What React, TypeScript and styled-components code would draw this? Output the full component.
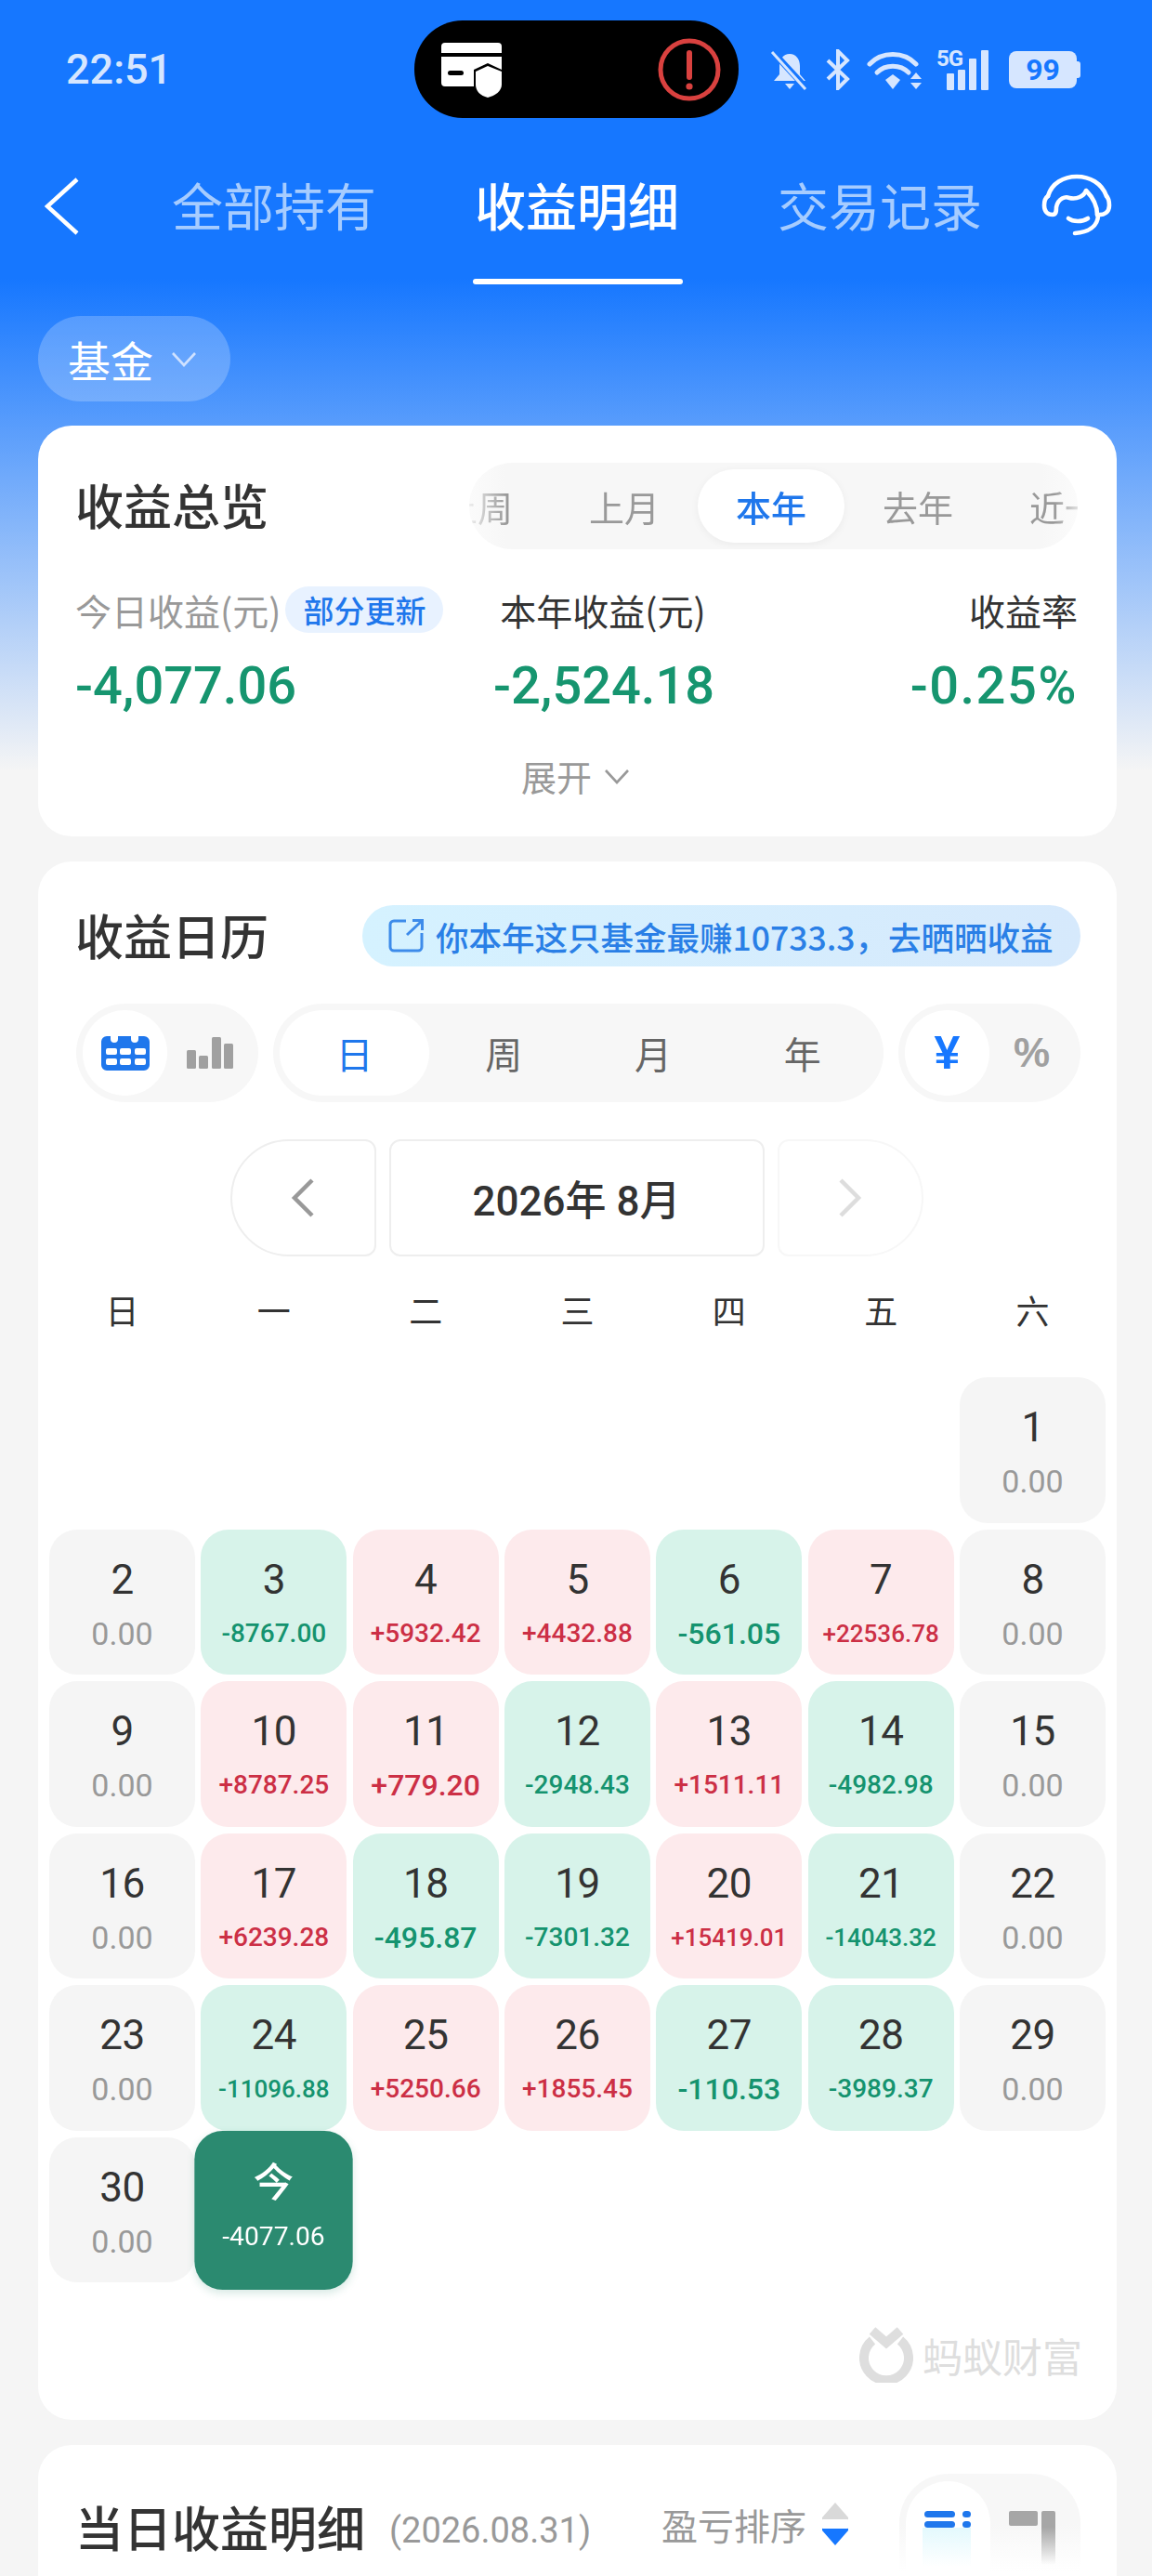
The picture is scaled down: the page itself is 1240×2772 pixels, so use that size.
import React from "react";
import styled, { createGlobalStyle } from "styled-components";

const CJK = `"Noto Sans CJK SC", "Noto Sans", sans-serif`;
const NUM = `Roboto, "Noto Sans CJK SC", sans-serif`;

type Tone = "none" | "up" | "down";

const DAYS: { day: number; value: string; tone: Tone; size?: number }[] = [
  { day: 1, value: "0.00", tone: "none" },
  { day: 2, value: "0.00", tone: "none" },
  { day: 3, value: "-8767.00", tone: "down" },
  { day: 4, value: "+5932.42", tone: "up" },
  { day: 5, value: "+4432.88", tone: "up" },
  { day: 6, value: "-561.05", tone: "down", size: 32 },
  { day: 7, value: "+22536.78", tone: "up", size: 26 },
  { day: 8, value: "0.00", tone: "none" },
  { day: 9, value: "0.00", tone: "none" },
  { day: 10, value: "+8787.25", tone: "up" },
  { day: 11, value: "+779.20", tone: "up", size: 32 },
  { day: 12, value: "-2948.43", tone: "down" },
  { day: 13, value: "+1511.11", tone: "up" },
  { day: 14, value: "-4982.98", tone: "down" },
  { day: 15, value: "0.00", tone: "none" },
  { day: 16, value: "0.00", tone: "none" },
  { day: 17, value: "+6239.28", tone: "up" },
  { day: 18, value: "-495.87", tone: "down", size: 32 },
  { day: 19, value: "-7301.32", tone: "down" },
  { day: 20, value: "+15419.01", tone: "up", size: 26 },
  { day: 21, value: "-14043.32", tone: "down", size: 26 },
  { day: 22, value: "0.00", tone: "none" },
  { day: 23, value: "0.00", tone: "none" },
  { day: 24, value: "-11096.88", tone: "down", size: 26 },
  { day: 25, value: "+5250.66", tone: "up" },
  { day: 26, value: "+1855.45", tone: "up" },
  { day: 27, value: "-110.53", tone: "down", size: 32 },
  { day: 28, value: "-3989.37", tone: "down" },
  { day: 29, value: "0.00", tone: "none" },
  { day: 30, value: "0.00", tone: "none" },
];

const CardIcon = () => (
  <svg width="66" height="60" viewBox="0 0 66 60">
    <path d="M4 1h57a4 4 0 0 1 4 4v7H0V5a4 4 0 0 1 4-4z" fill="#fff" />
    <path d="M0 16h65v14l-15-7-15 7v18H4a4 4 0 0 1-4-4z" fill="#fff" />
    <rect x="7" y="31" width="17" height="5" rx="2.5" fill="#000" />
    <path d="M50 26l15 6v14c0 7-7 12-15 14-8-2-13-7-13-14V32z" fill="#fff" />
  </svg>
);

const AlertIcon = () => (
  <svg width="68" height="68" viewBox="0 0 68 68">
    <circle cx="34" cy="34" r="31" fill="none" stroke="#d9413f" strokeWidth="5" />
    <path d="M34 16v26" stroke="#d9413f" strokeWidth="6" strokeLinecap="round" />
    <circle cx="34" cy="52" r="3.6" fill="#d9413f" />
  </svg>
);

const BellOff = () => (
  <svg width="42" height="44" viewBox="0 0 42 44">
    <path d="M21 5c-7 0-11 6-11 13v9l-6 7h34l-6-7v-9c0-7-4-13-11-13z" fill="#d6e6ff" />
    <path d="M16 37h10l-5 6z" fill="#d6e6ff" />
    <path d="M3 3l36 39" stroke="#1677ff" strokeWidth="7" />
    <path d="M2 3l36 40" stroke="#d6e6ff" strokeWidth="3" />
  </svg>
);

const BluetoothIcon = () => (
  <svg width="28" height="44" viewBox="0 0 28 44">
    <path d="M3 12l21 20-10 10V2l10 10L3 32" fill="none" stroke="#d6e6ff" strokeWidth="4" />
  </svg>
);

const WifiIcon = () => (
  <svg width="60" height="44" viewBox="0 0 60 44">
    <path d="M3 16C16 2 40 2 53 16" fill="none" stroke="#d6e6ff" strokeWidth="5" strokeLinecap="round" />
    <path d="M11 25c9-9 25-9 34 0" fill="none" stroke="#d6e6ff" strokeWidth="5" strokeLinecap="round" />
    <path d="M20 33l8-6 8 6-8 10z" fill="#d6e6ff" />
    <path d="M53 25l6 7H47zM53 43l6-7H47z" fill="#d6e6ff" />
  </svg>
);

const SignalIcon = () => (
  <svg width="46" height="44" viewBox="0 0 46 44">
    <rect x="0" y="26" width="8" height="18" rx="1" fill="#d6e6ff" />
    <rect x="12" y="22" width="8" height="22" rx="1" fill="#d6e6ff" />
    <rect x="24" y="10" width="8" height="34" rx="1" fill="#d6e6ff" />
    <rect x="37" y="1" width="8" height="43" rx="1" fill="#d6e6ff" />
  </svg>
);

const BackIcon = () => (
  <svg width="38" height="62" viewBox="0 0 38 62">
    <path d="M35 2L3 31l32 29" fill="none" stroke="#fff" strokeWidth="4.5" />
  </svg>
);

const HeadsetIcon = () => (
  <svg width="90" height="75" viewBox="15 12 90 75">
    <g fill="none" stroke="#fff" strokeWidth="4.6" strokeLinecap="round" strokeLinejoin="round">
      <path d="M29 42C33 28 46 21 60 21s27 7 32 21" />
      <path d="M29 42c-3 2-4 5-4 10 0 6 3 10 9 10 4 0 4-4 4-8 2-10 10-12 14-10 8 2 16-2 18-8 6 6 12 14 12 26" />
      <path d="M92 42c2 2 3 5 3 10 0 7-5 11-13 10" />
      <path d="M83 62c0 13-11 19-25 20" />
      <path d="M51 66c5 4 15 4 21 0" />
    </g>
  </svg>
);

const Chevron = ({ color, w = 28 }: { color: string; w?: number }) => (
  <svg width={w} height="17" viewBox="0 0 28 17">
    <path d="M2 2l12 13L26 2" fill="none" stroke={color} strokeWidth="2.6" />
  </svg>
);

const ShareIcon = () => (
  <svg width="38" height="36" viewBox="0 0 38 36">
    <path d="M19 2H6a4 4 0 0 0-4 4v24a4 4 0 0 0 4 4h26a4 4 0 0 0 4-4v-15" fill="none" stroke="#3d8bea" strokeWidth="3" />
    <path d="M20 17L35 3M26 1.5h10.5V12" fill="none" stroke="#3d8bea" strokeWidth="3" />
  </svg>
);

const CalendarIcon = () => (
  <svg width="54" height="38" viewBox="0 0 54 38">
    <path d="M7 1h4v3a4 4 0 0 0 8 0V1h14v3a4 4 0 0 0 8 0V1h6a6 6 0 0 1 6 6v25a6 6 0 0 1-6 6H7a6 6 0 0 1-6-6V7a6 6 0 0 1 6-6z" fill="#1f77ec" />
    {[6, 21, 37].map((x) =>
      [14, 25].map((y) => <rect key={`${x}-${y}`} x={x} y={y} width="12" height="7" rx="2" fill="#fff" />)
    )}
  </svg>
);

const BarsIcon = () => (
  <svg width="50" height="34" viewBox="0 0 50 34">
    <rect x="0" y="14" width="10" height="20" rx="1.5" fill="#a0a0a0" />
    <rect x="13" y="20" width="10" height="14" rx="1.5" fill="#a0a0a0" />
    <rect x="27" y="0" width="10" height="34" rx="1.5" fill="#a0a0a0" />
    <rect x="40" y="7" width="10" height="27" rx="1.5" fill="#a0a0a0" />
  </svg>
);

const NavChevron = ({ color, flip }: { color: string; flip?: boolean }) => (
  <svg width="26" height="42" viewBox="0 0 26 42" style={flip ? { transform: "scaleX(-1)" } : undefined}>
    <path d="M23 2L4 21l19 19" fill="none" stroke={color} strokeWidth="4.5" />
  </svg>
);

const AntLogo = () => (
  <svg width="58" height="60" viewBox="0 0 58 60">
    <path d="M14 14.5a24 24 0 1 0 30 0" fill="none" stroke="#dedede" strokeWidth="10" />
    <path d="M14 4l15 13L44 4" fill="none" stroke="#dedede" strokeWidth="10" />
  </svg>
);

const SortIcon = () => (
  <svg width="28" height="46" viewBox="0 0 28 46">
    <path d="M14 0l14 16a1 1 0 0 1-1 2H1a1 1 0 0 1-1-2z" fill="#d9d9d9" />
    <path d="M14 46L28 30a1 1 0 0 0-1-2H1a1 1 0 0 0-1 2z" fill="#1677ff" />
  </svg>
);

const ListIcon = () => (
  <svg width="50" height="18" viewBox="0 0 50 18">
    <rect x="0" y="0" width="33" height="7" rx="3.5" fill="#1f77ec" />
    <rect x="41" y="0" width="9" height="7" rx="3.5" fill="#1f77ec" />
    <rect x="0" y="11" width="33" height="7" rx="3.5" fill="#1f77ec" />
    <rect x="41" y="11" width="9" height="7" rx="3.5" fill="#1f77ec" />
  </svg>
);

const BlockIcon = () => (
  <svg width="50" height="58" viewBox="0 0 50 58">
    <defs>
      <linearGradient id="blockFade" x1="0" y1="0" x2="0" y2="1">
        <stop offset="0.3" stopColor="#a6a6a6" />
        <stop offset="1" stopColor="#a6a6a6" stopOpacity="0" />
      </linearGradient>
    </defs>
    <rect x="0" y="0" width="31" height="16" rx="2" fill="#a6a6a6" />
    <rect x="35" y="0" width="15" height="58" rx="2" fill="url(#blockFade)" />
  </svg>
);

export default function App() {
  return (
    <>
      <GlobalStyle />
      <Page>
        <StatusBar>
          <Time>22:51</Time>
          <Island>
            <CardIcon />
            <AlertIcon />
          </Island>
          <StatusIcons>
            <BellOff />
            <BluetoothIcon />
            <WifiIcon />
            <SignalGroup>
              <FiveG>5G</FiveG>
              <SignalIcon />
            </SignalGroup>
            <Battery>
              <BatteryBody>99</BatteryBody>
              <BatteryCap />
            </Battery>
          </StatusIcons>
        </StatusBar>

        <NavBar>
          <BackIcon />
          <Tabs>
            <Tab>全部持有</Tab>
            <Tab $active>收益明细</Tab>
            <Tab>交易记录</Tab>
          </Tabs>
          <HeadsetIcon />
        </NavBar>

        <FundChip>
          基金
          <Chevron color="#cfe1ff" />
        </FundChip>

        <Cards>
          <OverviewCard>
            <CardHeader>
              <CardTitle>收益总览</CardTitle>
              <PeriodSwitch>
                <PeriodTrack>
                  <PeriodItem>上周</PeriodItem>
                  <PeriodItem>上月</PeriodItem>
                  <PeriodItem $active>本年</PeriodItem>
                  <PeriodItem>去年</PeriodItem>
                  <PeriodItem>近一</PeriodItem>
                </PeriodTrack>
              </PeriodSwitch>
            </CardHeader>
            <StatsGrid>
              <StatLabel $muted>
                今日收益(元)<UpdateBadge>部分更新</UpdateBadge>
              </StatLabel>
              <StatLabel $center>本年收益(元)</StatLabel>
              <StatLabel $right>收益率</StatLabel>
              <StatValue>-4,077.06</StatValue>
              <StatValue $center>-2,524.18</StatValue>
              <StatValue $right>-0.25%</StatValue>
            </StatsGrid>
            <Expand>
              展开
              <Chevron color="#999" />
            </Expand>
          </OverviewCard>

          <CalendarCard>
            <CalendarHeader>
              <CardTitle>收益日历</CardTitle>
              <SharePill>
                <ShareIcon />
                你本年这只基金最赚10733.3，去晒晒收益
              </SharePill>
            </CalendarHeader>

            <ToggleRow>
              <IconToggle>
                <ToggleItem $active>
                  <CalendarIcon />
                </ToggleItem>
                <ToggleItem>
                  <BarsIcon />
                </ToggleItem>
              </IconToggle>
              <RangeToggle>
                <ToggleItem $active>日</ToggleItem>
                <ToggleItem>周</ToggleItem>
                <ToggleItem>月</ToggleItem>
                <ToggleItem>年</ToggleItem>
              </RangeToggle>
              <IconToggle>
                <UnitItem $active>¥</UnitItem>
                <UnitItem>%</UnitItem>
              </IconToggle>
            </ToggleRow>

            <MonthNav>
              <MonthArrow $side="left">
                <NavChevron color="#999" />
              </MonthArrow>
              <MonthLabel>2026年 8月</MonthLabel>
              <MonthArrow $side="right">
                <NavChevron color="#ddd" flip />
              </MonthArrow>
            </MonthNav>

            <Weekdays>
              {["日", "一", "二", "三", "四", "五", "六"].map((d) => (
                <Weekday key={d}>{d}</Weekday>
              ))}
            </Weekdays>

            <DayGrid>
              {DAYS.map((d) => (
                <DayCell key={d.day} $tone={d.tone} $first={d.day === 1}>
                  <DayNumber>{d.day}</DayNumber>
                  <DayValue $tone={d.tone} $size={d.size}>
                    {d.value}
                  </DayValue>
                </DayCell>
              ))}
              <TodayCell>
                <TodayMark>今</TodayMark>
                <TodayValue>-4077.06</TodayValue>
              </TodayCell>
            </DayGrid>

            <Watermark>
              <AntLogo />
              蚂蚁财富
            </Watermark>
          </CalendarCard>

          <DetailCard>
            <DetailTitleGroup>
              <CardTitle>当日收益明细</CardTitle>
              <DetailDate>(2026.08.31)</DetailDate>
            </DetailTitleGroup>
            <DetailTools>
              <SortButton>
                盈亏排序
                <SortIcon />
              </SortButton>
              <ViewToggle>
                <ViewItem $active>
                  <ListIcon />
                  <ListGlow />
                </ViewItem>
                <ViewItem>
                  <BlockIcon />
                </ViewItem>
              </ViewToggle>
            </DetailTools>
          </DetailCard>
        </Cards>
      </Page>
    </>
  );
}

const GlobalStyle = createGlobalStyle`
  html, body {
    margin: 0;
    padding: 0;
    background: #f5f5f5;
  }
  * {
    box-sizing: border-box;
  }
`;

const Page = styled.div`
  width: 1240px;
  height: 2772px;
  overflow: hidden;
  font-family: ${CJK};
  color: #333;
  background: linear-gradient(#1677ff 300px, #f5f5f5 830px);
`;

const StatusBar = styled.div`
  height: 127px;
  padding: 22px 76px 0 71px;
  display: flex;
  align-items: center;
`;

const Time = styled.div`
  width: 375px;
  font-family: ${NUM};
  font-size: 45px;
  font-weight: 500;
  color: #d6e6ff;
`;

const Island = styled.div`
  width: 349px;
  height: 105px;
  border-radius: 52px;
  background: #000;
  padding: 0 19px 0 29px;
  display: flex;
  align-items: center;
  justify-content: space-between;
`;

const StatusIcons = styled.div`
  margin-left: 34px;
  display: flex;
  align-items: center;
  gap: 17px;
`;

const SignalGroup = styled.div`
  position: relative;
  width: 57px;
  margin-left: -2px;
  display: flex;
  justify-content: flex-end;
`;

const FiveG = styled.div`
  position: absolute;
  left: 0;
  top: -2px;
  font-family: ${NUM};
  font-size: 24px;
  line-height: 24px;
  font-weight: 700;
  color: #d6e6ff;
  letter-spacing: -1px;
`;

const Battery = styled.div`
  display: flex;
  align-items: center;
  margin-left: 4px;
`;

const BatteryBody = styled.div`
  width: 73px;
  height: 40px;
  border-radius: 8px;
  background: #d6e6ff;
  color: #1677ff;
  font-family: ${NUM};
  font-size: 32px;
  font-weight: 700;
  line-height: 40px;
  text-align: center;
`;

const BatteryCap = styled.div`
  width: 4px;
  height: 18px;
  border-radius: 0 3px 3px 0;
  background: #d6e6ff;
`;

const NavBar = styled.div`
  height: 180px;
  padding: 64px 0 0 48px;
  display: flex;
  align-items: flex-start;

  & > svg:last-child {
    margin: -10px 0 0 57px;
  }
`;

const Tabs = styled.div`
  margin: -3px 0 0 99px;
  display: flex;
  gap: 106px;
`;

const Tab = styled.div<{ $active?: boolean }>`
  position: relative;
  width: 220px;
  font-size: 55px;
  line-height: 62px;
  white-space: nowrap;
  text-align: center;
  font-weight: ${(p) => (p.$active ? 500 : 400)};
  color: ${(p) => (p.$active ? "#fff" : "#a6ccff")};

  ${(p) =>
    p.$active &&
    `&::after {
      content: "";
      position: absolute;
      left: -2px;
      right: -4px;
      top: 112px;
      height: 6px;
      border-radius: 3px;
      background: #fff;
    }`}
`;

const FundChip = styled.div`
  margin: 33px 0 0 41px;
  width: 207px;
  height: 92px;
  border-radius: 46px;
  background: rgba(255, 255, 255, 0.22);
  color: #fff;
  font-size: 46px;
  display: flex;
  align-items: center;
  gap: 19px;
  padding-left: 32px;
`;

const Cards = styled.div`
  margin: 26px 38px 0 41px;
  display: flex;
  flex-direction: column;
  gap: 27px;
`;

const Card = styled.div`
  background: #fff;
  border-radius: 36px;
`;

const OverviewCard = styled(Card)`
  height: 442px;
  padding: 40px 42px 0 40px;
`;

const CardHeader = styled.div`
  display: flex;
  align-items: center;
  justify-content: space-between;
`;

const CardTitle = styled.div`
  margin-top: -3px;
  font-size: 52px;
  line-height: 64px;
  font-weight: 500;
  color: #333;
  white-space: nowrap;
`;

const PeriodSwitch = styled.div`
  width: 655px;
  height: 93px;
  border-radius: 47px;
  background: linear-gradient(90deg, #fbfbfb, #f7f7f7 6%, #f7f7f7 94%, #fbfbfb);
  overflow: hidden;
`;

const PeriodTrack = styled.div`
  display: flex;
  align-items: center;
  height: 100%;
  margin-left: -70px;
  width: 790px;
  -webkit-mask-image: linear-gradient(90deg, transparent 64px, #000 110px, #000 700px, transparent 735px);
  mask-image: linear-gradient(90deg, transparent 64px, #000 110px, #000 700px, transparent 735px);
`;

const PeriodItem = styled.div<{ $active?: boolean }>`
  width: 158px;
  height: 79px;
  flex: none;
  display: flex;
  align-items: center;
  justify-content: center;
  font-size: 38px;
  border-radius: 40px;
  color: ${(p) => (p.$active ? "#1f77ec" : "#999")};
  font-weight: ${(p) => (p.$active ? 500 : 400)};
  background: ${(p) => (p.$active ? "#fff" : "transparent")};
  box-shadow: ${(p) => (p.$active ? "0 2px 10px rgba(0,0,0,0.05)" : "none")};
`;

const StatsGrid = styled.div`
  margin-top: 40px;
  display: grid;
  grid-template-columns: 450px 236px 1fr;
  grid-template-rows: 50px 70px;
  row-gap: 22px;
  align-items: center;
`;

const StatLabel = styled.div<{ $muted?: boolean; $center?: boolean; $right?: boolean }>`
  display: flex;
  align-items: center;
  justify-content: ${(p) => (p.$center ? "center" : p.$right ? "flex-end" : "flex-start")};
  font-size: 39px;
  white-space: nowrap;
  color: ${(p) => (p.$muted ? "#999" : "#333")};
`;

const UpdateBadge = styled.span`
  margin-left: 5px;
  height: 50px;
  line-height: 50px;
  padding: 0 19px;
  border-radius: 25px;
  background: #e8f2ff;
  color: #1f77ec;
  font-size: 33px;
  font-weight: 500;
`;

const StatValue = styled.div<{ $center?: boolean; $right?: boolean }>`
  font-family: ${NUM};
  font-size: 56px;
  line-height: 70px;
  font-weight: 500;
  color: #16956f;
  white-space: nowrap;
  letter-spacing: ${(p) => (p.$right ? "1.5px" : "0")};
  text-align: ${(p) => (p.$center ? "center" : p.$right ? "right" : "left")};
`;

const Expand = styled.div`
  margin-top: 38px;
  display: flex;
  justify-content: center;
  align-items: center;
  gap: 13px;
  font-size: 38px;
  line-height: 48px;
  color: #999;
  transform: translateX(-1px);
`;

const CalendarCard = styled(Card)`
  height: 1677px;
  padding-top: 47px;
`;

const CalendarHeader = styled.div`
  padding: 0 39px 0 40px;
  height: 66px;
  display: flex;
  align-items: center;
  justify-content: space-between;
`;

const SharePill = styled.div`
  width: 773px;
  height: 66px;
  border-radius: 33px;
  padding-left: 28px;
  display: flex;
  align-items: center;
  gap: 13px;
  font-size: 35.5px;
  font-weight: 500;
  white-space: nowrap;
  color: #2a7fe6;
  background: linear-gradient(90deg, #d5f2ff, #d6e9fc);
`;

const ToggleRow = styled.div`
  margin-top: 40px;
  padding: 0 39px 0 41px;
  display: flex;
  justify-content: space-between;
`;

const ToggleGroup = styled.div`
  height: 106px;
  border-radius: 53px;
  background: #f7f7f7;
  padding: 7px;
  display: flex;
`;

const IconToggle = styled(ToggleGroup)`
  width: 196px;
`;

const RangeToggle = styled(ToggleGroup)`
  width: 657px;
`;

const ToggleItem = styled.div<{ $active?: boolean }>`
  flex: 1;
  display: flex;
  align-items: center;
  justify-content: center;
  border-radius: 46px;
  font-size: 40px;
  color: ${(p) => (p.$active ? "#1f77ec" : "#666")};
  background: ${(p) => (p.$active ? "#fff" : "transparent")};
`;

const UnitItem = styled(ToggleItem)`
  font-family: "Liberation Sans", sans-serif;
  font-weight: 700;
  font-size: ${(p) => (p.$active ? 50 : 44)}px;
  color: ${(p) => (p.$active ? "#1677ff" : "#a0a0a0")};
`;

const MonthNav = styled.div`
  margin-top: 40px;
  display: flex;
  justify-content: center;
  gap: 14px;
  transform: translateX(-1px);
`;

const MonthArrow = styled.div<{ $side: "left" | "right" }>`
  width: 157px;
  height: 126px;
  display: flex;
  align-items: center;
  justify-content: center;
  border: 2px solid ${(p) => (p.$side === "left" ? "#eeeeee" : "#f7f7f7")};
  border-radius: ${(p) => (p.$side === "left" ? "63px 12px 12px 63px" : "12px 63px 63px 12px")};
`;

const MonthLabel = styled.div`
  width: 404px;
  height: 126px;
  border: 2px solid #eeeeee;
  border-radius: 12px;
  display: flex;
  align-items: center;
  justify-content: center;
  font-family: ${NUM};
  font-size: 44px;
  font-weight: 500;
`;

const Weekdays = styled.div`
  margin-top: 27px;
  padding: 0 12px;
  display: grid;
  grid-template-columns: repeat(7, 1fr);
  column-gap: 6.33px;
`;

const Weekday = styled.div`
  height: 60px;
  line-height: 60px;
  text-align: center;
  font-size: 36px;
  color: #333;
`;

const DayGrid = styled.div`
  margin-top: 43px;
  padding: 0 12px;
  display: grid;
  grid-template-columns: repeat(7, 1fr);
  grid-auto-rows: 156.5px;
  gap: 7px 6.33px;
`;

const DayCell = styled.div<{ $tone: Tone; $first?: boolean }>`
  grid-column: ${(p) => (p.$first ? 7 : "auto")};
  padding-top: 26px;
  border-radius: 30px;
  display: flex;
  flex-direction: column;
  align-items: center;
  background: ${(p) => (p.$tone === "up" ? "#fdeaec" : p.$tone === "down" ? "#d7f3ea" : "#f5f5f5")};
`;

const DayNumber = styled.div`
  font-family: ${NUM};
  font-size: 44px;
  line-height: 56px;
  letter-spacing: -0.5px;
  color: #333;
`;

const DayValue = styled.div<{ $tone: Tone; $size?: number }>`
  margin-top: 8px;
  font-family: ${NUM};
  font-size: ${(p) => p.$size ?? (p.$tone === "none" ? 34 : 28)}px;
  font-weight: ${(p) => (p.$tone === "none" ? 400 : 500)};
  line-height: 44px;
  white-space: nowrap;
  color: ${(p) => (p.$tone === "up" ? "#cc2f45" : p.$tone === "down" ? "#15936f" : "#999")};
`;

const TodayCell = styled.div`
  padding-top: 20px;
  border-radius: 28px;
  display: flex;
  flex-direction: column;
  align-items: center;
  color: #fff;
  background: #2b8a70;
  transform: scale(1.085, 1.09);
  box-shadow: 0 3px 8px rgba(43, 138, 112, 0.18);
`;

const TodayMark = styled.div`
  font-size: 40px;
  line-height: 56px;
  font-weight: 500;
`;

const TodayValue = styled.div`
  margin-top: 6px;
  font-family: ${NUM};
  font-size: 26px;
  line-height: 44px;
`;

const Watermark = styled.div`
  margin-top: 48px;
  padding-right: 37px;
  display: flex;
  justify-content: flex-end;
  align-items: center;
  gap: 10px;
  font-size: 43px;
  line-height: 60px;
  color: #dedede;
`;

const DetailCard = styled(Card)`
  height: 200px;
  padding: 31px 39px 0 40px;
  display: flex;
  justify-content: space-between;
  align-items: flex-start;
`;

const DetailTitleGroup = styled.div`
  display: flex;
  align-items: center;
  gap: 26px;
  margin-top: 28px;
`;

const DetailDate = styled.div`
  font-family: ${NUM};
  font-size: 38px;
  color: #999;
  margin-top: 5px;
`;

const DetailTools = styled.div`
  display: flex;
  align-items: flex-start;
  gap: 55px;
`;

const SortButton = styled.div`
  margin-top: 31px;
  display: flex;
  align-items: center;
  gap: 17px;
  font-size: 39px;
  line-height: 46px;
  color: #999;
`;

const ViewToggle = styled.div`
  width: 195px;
  height: 108px;
  padding: 8px 7px 0;
  display: flex;
  border-radius: 53px 53px 0 0;
  background: linear-gradient(#f7f7f7 50%, #fff 98%);
`;

const ViewItem = styled.div<{ $active?: boolean }>`
  position: relative;
  flex: 1;
  padding-top: 32px;
  display: flex;
  justify-content: center;
  border-radius: 46px 46px 0 0;
  background: ${(p) => (p.$active ? "#fff" : "transparent")};
`;

const ListGlow = styled.div`
  position: absolute;
  left: 18px;
  top: 50px;
  width: 52px;
  height: 42px;
  background: linear-gradient(#e3f9fd, #ffffff);
`;
